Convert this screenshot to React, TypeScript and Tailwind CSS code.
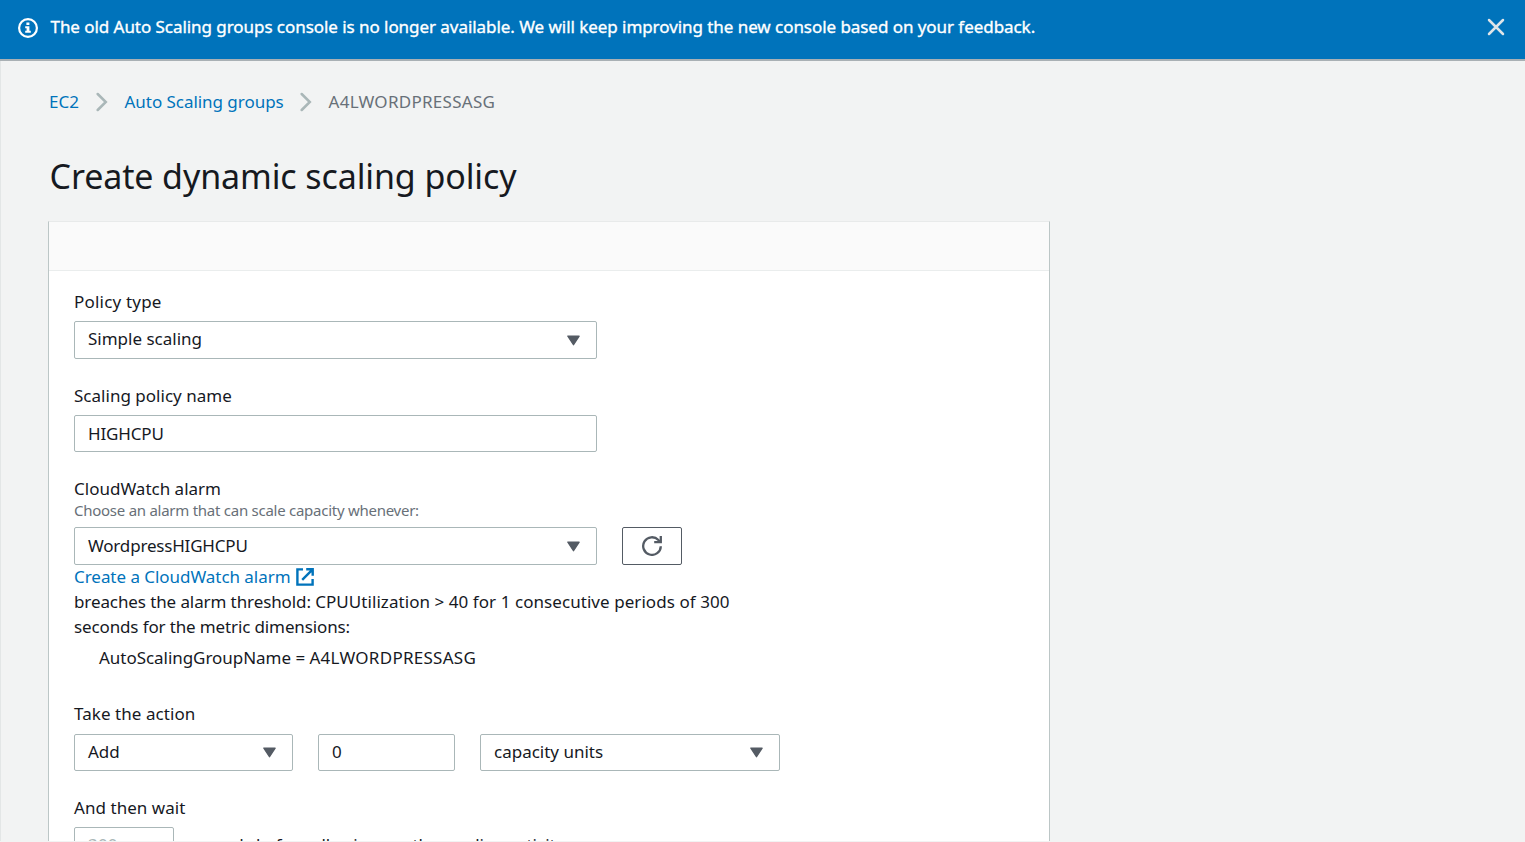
import type { ReactNode } from "react";

function InfoIcon() {
  return (
    <svg width="20" height="20" viewBox="0 0 20 20" fill="none" className="shrink-0">
      <circle cx="10" cy="10" r="8.9" stroke="#fff" strokeWidth="2.2" />
      <path d="M8.4 4.6h3v2.5h-3zM7.2 8.2h4.2v4.5h1.4v2.1H7.2v-2.1h1.4v-2.4H7.2z" fill="#fff" />
    </svg>
  );
}

function CloseIcon() {
  return (
    <svg width="18" height="18" viewBox="0 0 18 18" fill="none" stroke="#dfe5e8" strokeWidth="2.5" strokeLinecap="round">
      <path d="M2 2l14 14M16 2L2 16" />
    </svg>
  );
}

function Chevron() {
  return (
    <svg width="12" height="20" viewBox="0 0 12 20" fill="none" stroke="#aab7b8" strokeWidth="2.5" strokeLinecap="round" className="shrink-0">
      <path d="M1.7 2L9.8 10L1.7 18" />
    </svg>
  );
}

function Caret() {
  return (
    <svg width="13" height="11" viewBox="0 0 13 11" fill="#545b64" stroke="#545b64" strokeWidth="1.4" strokeLinejoin="round" className="shrink-0">
      <path d="M.9 1.2h11.2L6.5 9.7z" />
    </svg>
  );
}

function ExternalIcon() {
  return (
    <svg width="18" height="18" viewBox="0 0 18 18" fill="none" stroke="#0073bb" strokeWidth="2.4" className="shrink-0">
      <path d="M7 1.4H1.4v15.2h15.2V11" />
      <path d="M10.2 1.3h6.5v6.5M16.4 1.6L6.2 11.8" />
    </svg>
  );
}

function RefreshIcon() {
  return (
    <svg width="20" height="20" viewBox="0 0 20 20" fill="none" stroke="#545b64" strokeWidth="2.3">
      <path d="M18.8 10.2A8.8 8.8 0 1 1 16.4 4L18.2 5.8" />
      <path d="M18.8 0v6.1h-6.6" />
    </svg>
  );
}

function Field({ className, caret, children }: { className: string; caret?: boolean; children: ReactNode }) {
  return (
    <div className={`flex items-center justify-between rounded-xs border border-[#aab7b8] bg-white pr-4 pl-[13px] ${className}`}>
      {children}
      {caret && <Caret />}
    </div>
  );
}

export default function App() {
  return (
    <div className="flex h-[842px] w-full flex-col overflow-hidden bg-[#f2f3f3] font-['Noto_Sans',sans-serif] text-[17px] leading-[25px] whitespace-nowrap text-[#16191f]">
      <header className="flex h-[61px] shrink-0 items-start border-b-2 border-[#a9b0b4] bg-[#0073bb] bg-clip-padding pt-[14px] pr-5 pl-[18px] text-white">
        <div className="flex flex-1 items-center gap-[12.5px]">
          <div className="pt-0.5">
            <InfoIcon />
          </div>
          <p className="tracking-[-0.053px] [-webkit-text-stroke:0.35px_white]">
            The old Auto Scaling groups console is no longer available. We will keep improving the new console based on your feedback.
          </p>
        </div>
        <button className="mt-1" aria-label="Dismiss">
          <CloseIcon />
        </button>
      </header>

      <main className="flex min-h-0 flex-1 flex-col overflow-hidden border-l border-[#e3e6e6] pl-[47px]">
        <nav className="mt-7 flex items-center pl-px">
          <a className="w-[47px] text-[#0073bb]">EC2</a>
          <Chevron />
          <a className="ml-[16.5px] w-[175.5px] tracking-[-0.04px] text-[#0073bb]">Auto Scaling groups</a>
          <Chevron />
          <span className="ml-[16.5px] tracking-[0.27px] text-[#687078]">A4LWORDPRESSASG</span>
        </nav>

        <h1 className="mt-[39px] pl-[1.5px] text-[34px] leading-[46px] tracking-[-0.11px]">Create dynamic scaling policy</h1>

        <section className="mt-[22px] w-[1002px] shrink-0 border-x border-t border-[#bcc6c6] border-t-[#e8eaea] bg-white">
          <div className="h-[49px] border-b border-[#eaeded] bg-[#fafafa]" />

          <div className="flex flex-col px-[25px] pt-[18px]">
            <label className="tracking-[0.2px]">Policy type</label>
            <Field caret className="mt-[7px] h-[38px] w-[523px]">
              <span className="pb-[3px]">Simple scaling</span>
            </Field>

            <label className="mt-6 tracking-[0.02px]">Scaling policy name</label>
            <Field className="mt-[7px] h-[37px] w-[523px]">
              <span className="tracking-[-0.15px]">HIGHCPU</span>
            </Field>

            <label className="mt-6">CloudWatch alarm</label>
            <p className="text-[15px] leading-[19px] tracking-[-0.26px] text-[#687078]">Choose an alarm that can scale capacity whenever:</p>
            <div className="mt-[7px] flex gap-[25px]">
              <Field caret className="h-[38px] w-[523px]">
                <span className="pb-px tracking-[-0.19px]">WordpressHIGHCPU</span>
              </Field>
              <button className="flex h-[38px] w-[60px] items-center justify-center rounded-xs border border-[#545b64]" aria-label="Refresh">
                <RefreshIcon />
              </button>
            </div>
            <a className="-mt-px flex items-center gap-[5px] tracking-[-0.045px] text-[#0073bb]">
              Create a CloudWatch alarm
              <ExternalIcon />
            </a>
            <p>
              <span className="tracking-[-0.1px]">breaches the alarm threshold: </span>
              <span className="tracking-[0.06px]">CPUUtilization &gt; 40 for 1 consecutive periods of 300</span>
              <br />
              <span className="tracking-[-0.13px]">seconds for the metric dimensions:</span>
            </p>
            <p className="mt-1.5 pl-[25px]">
              <span className="tracking-[-0.04px]">AutoScalingGroupName = </span>
              <span className="tracking-[0.27px]">A4LWORDPRESSASG</span>
            </p>

            <label className="mt-[31px] tracking-[0.07px]">Take the action</label>
            <div className="mt-2 flex gap-[25px]">
              <Field caret className="h-[37px] w-[219px]">
                <span className="pb-0.5">Add</span>
              </Field>
              <Field className="h-[37px] w-[137px]">
                <span className="pb-0.5">0</span>
              </Field>
              <Field caret className="h-[37px] w-[300px]">
                <span className="pb-0.5">capacity units</span>
              </Field>
            </div>

            <label className="mt-6 tracking-[0.05px]">And then wait</label>
            <div className="mt-[7px] flex items-center gap-[13px]">
              <Field className="h-[37px] w-[100px]">
                <span className="pb-0.5 tracking-[0.2px] text-[#aab7b8]">300</span>
              </Field>
              <span className="pb-0.5 tracking-[-0.1px]">seconds before allowing another scaling activity</span>
            </div>
          </div>
        </section>
      </main>
      <div className="h-px shrink-0 bg-[#f2f3f3]" />
    </div>
  );
}
